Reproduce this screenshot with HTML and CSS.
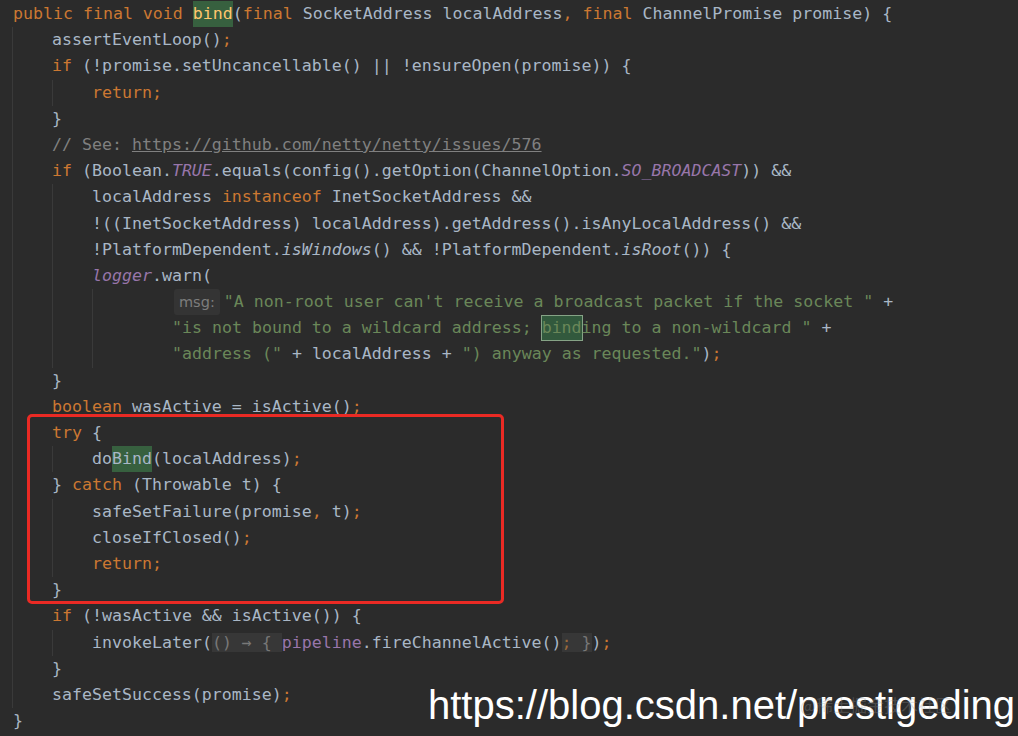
FILE: index.html
```html
<!DOCTYPE html>
<html lang="en">
<head>
    <meta charset="UTF-8">
    <title>AbstractChannel.bind</title>
    <link rel="stylesheet" href="styles.css">
</head>
<body>
    <div class="editor">
        <div class="code">
            <div class="ln"><span class="k">public final void </span><span class="m hl">bind</span>(<span class="k">final</span> SocketAddress localAddress<span class="k">, final</span> ChannelPromise promise) {</div>
            <div class="blk">
                <div class="ln">assertEventLoop()<span class="k">;</span></div>
                <div class="ln"><span class="k">if</span> (!promise.setUncancellable() || !ensureOpen(promise)) {</div>
                <div class="blk">
                    <div class="ln"><span class="k">return;</span></div>
                </div>
                <div class="ln">}</div>
                <div class="ln"><span class="c">// See: <span class="u">https://github.com/netty/netty/issues/576</span></span></div>
                <div class="ln"><span class="k">if</span> (Boolean.<span class="f">TRUE</span>.equals(config().getOption(ChannelOption.<span class="f">SO_BROADCAST</span>)) &amp;&amp;</div>
                <div class="blk">
                    <div class="ln">localAddress <span class="k">instanceof</span> InetSocketAddress &amp;&amp;</div>
                    <div class="ln">!((InetSocketAddress) localAddress).getAddress().isAnyLocalAddress() &amp;&amp;</div>
                    <div class="ln">!PlatformDependent.<span class="i">isWindows</span>() &amp;&amp; !PlatformDependent.<span class="i">isRoot</span>()) {</div>
                    <div class="ln"><span class="f">logger</span>.warn(</div>
                    <div class="blk wide">
                        <div class="ln"><span class="hint">msg:</span><span class="s">"A non-root user can't receive a broadcast packet if the socket "</span> +</div>
                        <div class="ln"><span class="s">"is not bound to a wildcard address; <span class="hs">bind</span>ing to a non-wildcard "</span> +</div>
                        <div class="ln"><span class="s">"address ("</span> + localAddress + <span class="s">") anyway as requested."</span>)<span class="k">;</span></div>
                    </div>
                </div>
                <div class="ln">}</div>
                <div class="ln"><span class="k">boolean</span> wasActive = isActive()<span class="k">;</span></div>
                <div class="ln"><span class="k">try</span> {</div>
                <div class="blk">
                    <div class="ln">do<span class="hl">Bind</span>(localAddress)<span class="k">;</span></div>
                </div>
                <div class="ln">} <span class="k">catch</span> (Throwable t) {</div>
                <div class="blk">
                    <div class="ln">safeSetFailure(promise<span class="k">,</span> t)<span class="k">;</span></div>
                    <div class="ln">closeIfClosed()<span class="k">;</span></div>
                    <div class="ln"><span class="k">return;</span></div>
                </div>
                <div class="ln">}</div>
                <div class="ln"><span class="k">if</span> (!wasActive &amp;&amp; isActive()) {</div>
                <div class="blk">
                    <div class="ln">invokeLater(<span class="fold">() → { </span><span class="fp">pipeline</span>.fireChannelActive()<span class="fold"><span class="k">;</span> }</span>)<span class="k">;</span></div>
                </div>
                <div class="ln">}</div>
                <div class="ln">safeSetSuccess(promise)<span class="k">;</span></div>
            </div>
            <div class="ln">}</div>
        </div>

        <!-- annotation drawn over the screenshot -->
        <div class="mark"></div>
        <div class="watermark">https://blog.csdn.net/prestigeding</div>
        <div class="stamp">@稀土掘金技术社区</div>
    </div>
</body>
</html>
```

FILE: styles.css
```css
:root {
    --bg: #2b2b2b;
    --text: #a9b7c6;
    --keyword: #cc7832;
    --string: #6a8759;
    --comment: #808080;
    --field: #9876aa;
    --method: #ffc66d;
    --guide: #3a3a3a;
}

html, body {
    margin: 0;
    padding: 0;
    background: var(--bg);
}

.editor {
    position: relative;
    width: 1018px;
    height: 736px;
    overflow: hidden;
}

.code {
    padding: 1px 0 0 12px;
    font-family: "DejaVu Sans Mono", "Liberation Mono", monospace;
    font-size: 16.6px;
    color: var(--text);
}

.ln {
    height: 26.2px;
    line-height: 26.2px;
    white-space: pre;
    padding-left: 1px;
}

.blk {
    border-left: 1px solid var(--guide);
    padding-left: 39px;
}

.blk.wide {
    padding-left: 79px;
}

.blk .ln {
    padding-left: 0;
}

.k { color: var(--keyword); }
.s { color: var(--string); }
.c { color: var(--comment); }
.u { text-decoration: underline; }
.m { color: var(--method); }
.f { color: var(--field); font-style: italic; }
.fp { color: var(--field); }
.i { font-style: italic; }

.hl {
    display: inline-block;
    height: 26.2px;
    background: #37603f;
}

.hs {
    display: inline-block;
    height: 24px;
    line-height: 24px;
    vertical-align: top;
    margin-top: 1px;
    box-sizing: border-box;
    background: #32593d;
    outline: 1px solid #86a386;
}

.hint {
    display: inline-block;
    height: 26px;
    line-height: 26px;
    vertical-align: top;
    margin: 0 4px 0 2px;
    padding: 0 5px;
    background: #343434;
    border-radius: 3px;
    font-family: "DejaVu Sans", "Noto Sans", sans-serif;
    font-size: 14.5px;
    color: #7d7d7d;
}

.fold {
    background: #373737;
    color: #787878;
}

.fold .k {
    color: #9a6a3c;
}

.mark {
    position: absolute;
    left: 27px;
    top: 414px;
    width: 471px;
    height: 184px;
    border: 3px solid #ea2a24;
    border-radius: 5px;
}

.watermark {
    position: absolute;
    left: 428px;
    top: 685px;
    font-family: "Liberation Sans", Arial, sans-serif;
    font-size: 40px;
    line-height: 40px;
    color: #ffffff;
    white-space: nowrap;
}

.stamp {
    position: absolute;
    left: 800px;
    top: 692px;
    font-family: "Noto Sans CJK SC", sans-serif;
    font-size: 17px;
    color: rgba(150, 150, 150, 0.3);
    white-space: nowrap;
}
```
